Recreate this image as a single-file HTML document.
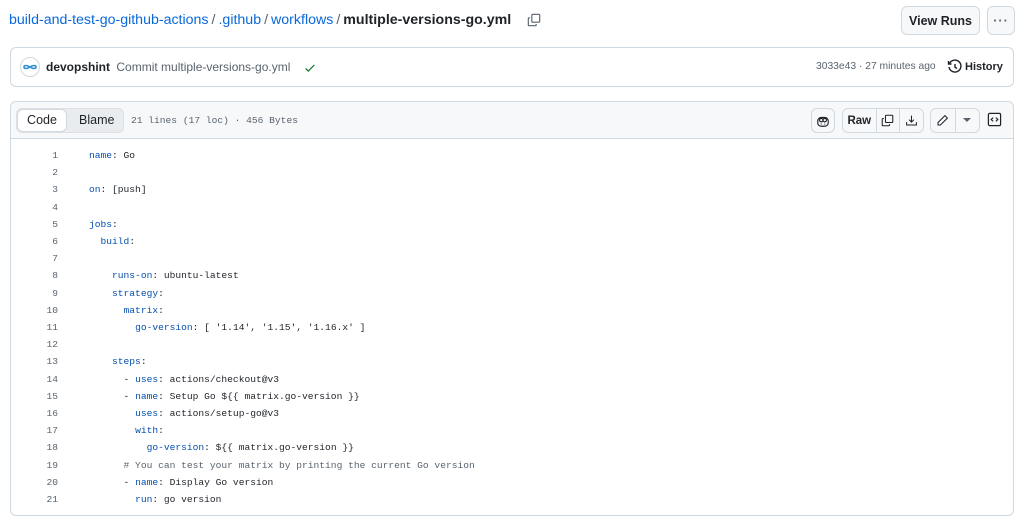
<!DOCTYPE html>
<html><head><meta charset="utf-8"><style>
*{box-sizing:border-box;margin:0;padding:0}
body{width:1024px;height:524px;background:#fff;font-family:"Liberation Sans",sans-serif;color:#1f2328;position:relative;overflow:hidden}
.bc{position:absolute;left:9px;top:10px;font-size:14.2px;line-height:20px;white-space:nowrap}
.bc a{color:#0969da;text-decoration:none}
.bc .sep{color:#59636e;margin:0 3px}
.bc b{font-weight:600}
.btn{position:absolute;border:1px solid #d1d9e0;background:#f6f8fa;border-radius:6px;font-size:12.5px;font-weight:600;display:flex;align-items:center;justify-content:center}
.box{position:absolute;border:1px solid #d1d9e0;border-radius:6px}
.code{position:absolute;top:147px;left:0;font-family:"Liberation Mono",monospace;font-size:9.6px;line-height:17.2px}
.ln{position:absolute;left:20px;width:38px;text-align:right;color:#59636e}
.tx{position:absolute;left:89px;white-space:pre;color:#1f2328}
.k{color:#0550ae}.c{color:#59636e}
svg{display:block}
</style></head><body>
<div class="bc"><a>build-and-test-go-github-actions</a><span class="sep">/</span><a>.github</a><span class="sep">/</span><a>workflows</a><span class="sep">/</span><b>multiple-versions-go.yml</b></div>
<svg style="position:absolute;left:527px;top:13px" width="14" height="14" viewBox="0 0 16 16" fill="none" stroke="#59636e" stroke-width="1.3"><rect x="5.5" y="1.5" width="9" height="9" rx="1"/><path d="M3.5 5.5h-1a1 1 0 0 0-1 1v7a1 1 0 0 0 1 1h7a1 1 0 0 0 1-1v-1"/></svg>
<div class="btn" style="left:901px;top:6px;width:79px;height:29px">View Runs</div>
<div class="btn" style="left:987px;top:6px;width:28px;height:29px;color:#59636e;letter-spacing:1px">···</div>

<div class="box" style="left:10px;top:47px;width:1004px;height:40px"></div>
<div style="position:absolute;left:20px;top:57px;width:20px;height:20px;border-radius:50%;border:1px solid #d1d9e0;background:#fff"><svg width="18" height="18" viewBox="0 0 18 18"><path d="M3 9c0-2 3-2 6 0s6 2 6 0-3-2-6 0-6 2-6 0z" fill="none" stroke="#2f8fd0" stroke-width="1.6"/></svg></div>
<div style="position:absolute;left:46px;top:60px;font-size:12px;white-space:nowrap"><b style="font-weight:600">devopshint</b> <span style="color:#59636e;margin-left:3px">Commit multiple-versions-go.yml</span></div>
<svg style="position:absolute;left:303px;top:61px" width="14" height="14" viewBox="0 0 16 16"><path d="M3 8.5l3 3 7-7" fill="none" stroke="#1a7f37" stroke-width="1.5"/></svg>
<div style="position:absolute;left:816px;top:61px;font-size:10.3px;color:#59636e;white-space:nowrap">3033e43 · 27 minutes ago</div>
<svg style="position:absolute;left:947px;top:59px" width="16" height="16" viewBox="0 0 16 16" fill="none" stroke="#1f2328" stroke-width="1.4"><path d="M2.5 4.5A6 6 0 1 1 2 8"/><path d="M1.5 2v3h3"/><path d="M8 5v3.2l2 1.3"/></svg>
<div style="position:absolute;left:965px;top:61px;font-size:11px;font-weight:600">History</div>

<div class="box" style="left:10px;top:101px;width:1004px;height:415px"></div>
<div style="position:absolute;left:11px;top:102px;width:1002px;height:37px;background:#f6f8fa;border-bottom:1px solid #d1d9e0;border-radius:6px 6px 0 0"></div>
<div style="position:absolute;left:16px;top:108px;width:108px;height:25px;background:#e9ecef;border-radius:6px;border:1px solid #dde1e5"></div>
<div style="position:absolute;left:17px;top:109px;width:50px;height:23px;background:#fff;border:1px solid #d1d9e0;border-radius:6px;font-size:12.5px;text-align:center;line-height:21px">Code</div>
<div style="position:absolute;left:79px;top:113px;font-size:12.5px;color:#1f2328">Blame</div>
<div style="position:absolute;left:131px;top:115px;font-family:'Liberation Mono',monospace;font-size:9.6px;color:#59636e">21 lines (17 loc) · 456 Bytes</div>

<div class="btn" style="left:811px;top:108px;width:24px;height:25px;background:#f6f8fa"><svg width="14" height="14" viewBox="0 0 16 16" fill="none" stroke="#1f2328" stroke-width="1.3"><rect x="2" y="4" width="12" height="10" rx="4"/><circle cx="6" cy="7" r="2"/><circle cx="10" cy="7" r="2"/><path d="M6 11v1M10 11v1"/></svg></div>
<div class="btn" style="left:842px;top:108px;width:82px;height:25px;justify-content:flex-start"><span style="width:33px;text-align:center;font-size:11.5px">Raw</span><span style="width:24px;height:23px;border-left:1px solid #d1d9e0;display:flex;align-items:center;justify-content:center"><svg width="13" height="13" viewBox="0 0 16 16" fill="none" stroke="#1f2328" stroke-width="1.3"><rect x="5.5" y="1.5" width="9" height="9" rx="1"/><path d="M3.5 5.5h-1a1 1 0 0 0-1 1v7a1 1 0 0 0 1 1h7a1 1 0 0 0 1-1v-1"/></svg></span><span style="width:24px;height:23px;border-left:1px solid #d1d9e0;display:flex;align-items:center;justify-content:center"><svg width="13" height="13" viewBox="0 0 16 16" fill="none" stroke="#1f2328" stroke-width="1.3"><path d="M2 10v3.5h12V10M8 2v8M5 7l3 3 3-3"/></svg></span></div>
<div class="btn" style="left:930px;top:108px;width:50px;height:25px;justify-content:flex-start"><span style="width:24px;display:flex;justify-content:center"><svg width="13" height="13" viewBox="0 0 16 16" fill="none" stroke="#1f2328" stroke-width="1.3"><path d="M11 2l3 3-8.5 8.5H2.5v-3z"/></svg></span><span style="width:25px;height:23px;border-left:1px solid #d1d9e0;display:flex;align-items:center;justify-content:center"><svg width="8" height="5" viewBox="0 0 8 5"><path d="M0 0h8L4 4z" fill="#59636e"/></svg></span></div>
<div style="position:absolute;left:987px;top:112px"><svg width="15" height="15" viewBox="0 0 16 16" fill="none" stroke="#1f2328" stroke-width="1.3"><rect x="1.5" y="1.5" width="13" height="13" rx="1.5"/><path d="M6.5 6L4.5 8l2 2M9.5 6l2 2-2 2"/></svg></div>

<div class="code">
<div class="ln" style="top:0">1</div><div class="tx" style="top:0"><span class="k">name</span>: Go</div>
<div class="ln" style="top:17.2px">2</div>
<div class="ln" style="top:34.4px">3</div><div class="tx" style="top:34.4px"><span class="k">on</span>: [push]</div>
<div class="ln" style="top:51.6px">4</div>
<div class="ln" style="top:68.8px">5</div><div class="tx" style="top:68.8px"><span class="k">jobs</span>:</div>
<div class="ln" style="top:86px">6</div><div class="tx" style="top:86px">  <span class="k">build</span>:</div>
<div class="ln" style="top:103.2px">7</div>
<div class="ln" style="top:120.4px">8</div><div class="tx" style="top:120.4px">    <span class="k">runs-on</span>: ubuntu-latest</div>
<div class="ln" style="top:137.6px">9</div><div class="tx" style="top:137.6px">    <span class="k">strategy</span>:</div>
<div class="ln" style="top:154.8px">10</div><div class="tx" style="top:154.8px">      <span class="k">matrix</span>:</div>
<div class="ln" style="top:172px">11</div><div class="tx" style="top:172px">        <span class="k">go-version</span>: [ '1.14', '1.15', '1.16.x' ]</div>
<div class="ln" style="top:189.2px">12</div>
<div class="ln" style="top:206.4px">13</div><div class="tx" style="top:206.4px">    <span class="k">steps</span>:</div>
<div class="ln" style="top:223.6px">14</div><div class="tx" style="top:223.6px">      - <span class="k">uses</span>: actions/checkout@v3</div>
<div class="ln" style="top:240.8px">15</div><div class="tx" style="top:240.8px">      - <span class="k">name</span>: Setup Go ${{ matrix.go-version }}</div>
<div class="ln" style="top:258px">16</div><div class="tx" style="top:258px">        <span class="k">uses</span>: actions/setup-go@v3</div>
<div class="ln" style="top:275.2px">17</div><div class="tx" style="top:275.2px">        <span class="k">with</span>:</div>
<div class="ln" style="top:292.4px">18</div><div class="tx" style="top:292.4px">          <span class="k">go-version</span>: ${{ matrix.go-version }}</div>
<div class="ln" style="top:309.6px">19</div><div class="tx" style="top:309.6px">      <span class="c"># You can test your matrix by printing the current Go version</span></div>
<div class="ln" style="top:326.8px">20</div><div class="tx" style="top:326.8px">      - <span class="k">name</span>: Display Go version</div>
<div class="ln" style="top:344px">21</div><div class="tx" style="top:344px">        <span class="k">run</span>: go version</div>
</div>
</body></html>
